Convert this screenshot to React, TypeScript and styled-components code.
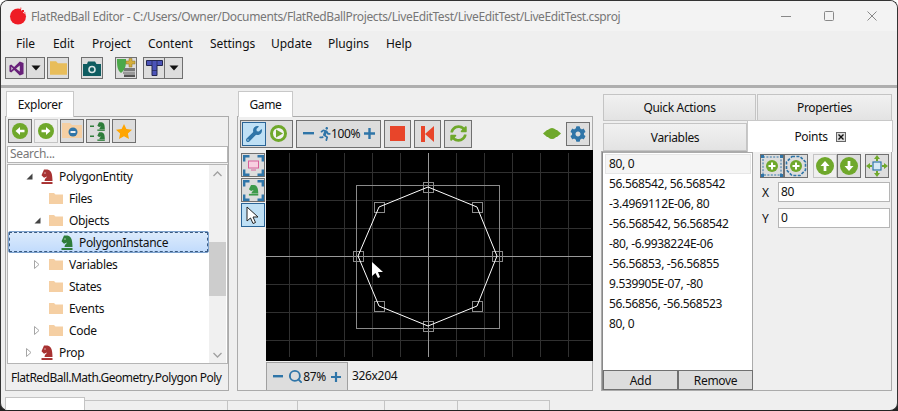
import React from "react";
import styled, { createGlobalStyle } from "styled-components";
import { FaCog, FaRunning, FaSyncAlt, FaWrench } from "react-icons/fa";
import { Search } from "lucide-react";

const UI_FONT = `"Noto Sans", "Open Sans", sans-serif`;
const GREEN = "#6fa82b";
const BLUE = "#2f75a8";
const RED = "#a83232";
const KNIGHT_GREEN = "#2e7d3a";
const ORANGE_RED = "#e8452a";
const KNIGHT_PATH = "M3 0.5 H6.5 C10.5 1 11.5 5 11.5 10.5 H3.5 C3.5 8.5 5.5 7.5 6 6.5 L3 7.5 L0.5 5.5 Z";

const GlobalStyle = createGlobalStyle`
  html, body {
    margin: 0;
    padding: 0;
    width: 898px;
    height: 411px;
    overflow: hidden;
    background: linear-gradient(#ffffff 50%, #222 50%);
  }
  * { box-sizing: border-box; }
`;

const Window = styled.div`
  width: 898px;
  height: 411px;
  display: flex;
  flex-direction: column;
  background: #efefef;
  border: 1px solid #333;
  border-bottom-color: #222;
  border-radius: 8px;
  overflow: hidden;
  font-family: ${UI_FONT};
  font-size: 12px;
  letter-spacing: -0.33px;
  color: #111;
`;

const TitleBar = styled.div`
  height: 30px;
  flex: none;
  display: flex;
  align-items: center;
  padding-left: 8px;
  background: #f3f3f3;
`;

const TitleText = styled.div`
  margin-left: 4px;
  color: #777;
  font-size: 12px;
  letter-spacing: -0.37px;
  white-space: nowrap;
  flex: 1;
`;

const WindowControls = styled.div`
  display: flex;
  align-items: center;
  width: 138px;
  justify-content: space-between;
  padding: 0 20px 0 22px;
`;

const MenuBar = styled.div`
  height: 24px;
  flex: none;
  display: flex;
  align-items: center;
  padding-left: 15px;
`;

const MenuItem = styled.div<{ $w: number }>`
  width: ${(p) => p.$w}px;
  font-size: 12px;
  letter-spacing: -0.05px;
`;

const ToolBar = styled.div`
  height: 33px;
  flex: none;
  display: flex;
  padding: 2px 0 0 4px;
  border-bottom: 3px solid #aeaeae;
`;

const ToolGroup = styled.div<{ $ml?: number }>`
  display: flex;
  margin-left: ${(p) => p.$ml ?? 0}px;
  height: 23px;
`;

const IconButton = styled.div<{
  $w?: number;
  $h?: number;
  $active?: boolean;
  $light?: boolean;
  $flat?: boolean;
  $ml?: number;
}>`
  width: ${(p) => p.$w ?? 24}px;
  height: ${(p) => p.$h ?? 24}px;
  margin-left: ${(p) => p.$ml ?? 0}px;
  flex: none;
  display: flex;
  align-items: center;
  justify-content: center;
  border: 1px solid
    ${(p) => (p.$flat ? "transparent" : p.$active ? "#2a6496" : p.$light ? "#c4c4c4" : "#707070")};
  background: ${(p) => (p.$active ? "#bfe0f5" : p.$light ? "#efefef" : "#dddddd")};
`;

const Main = styled.div`
  flex: none;
  height: 300px;
  margin-top: 3px;
  padding-left: 4px;
  display: flex;
`;

const Column = styled.div<{ $w: number; $mr?: number }>`
  width: ${(p) => p.$w}px;
  margin-right: ${(p) => p.$mr ?? 0}px;
  display: flex;
  flex-direction: column;
`;

const TabStrip = styled.div`
  height: 26px;
  flex: none;
  display: flex;
  padding-left: 1px;
`;

const Tab = styled.div<{ $w: number }>`
  width: ${(p) => p.$w}px;
  height: 26px;
  display: flex;
  align-items: center;
  justify-content: center;
  background: #fff;
  border: 1px solid #c8c8c8;
  border-bottom: none;
  position: relative;
  z-index: 1;
  font-size: 12px;
`;

const Panel = styled.div`
  flex: 1;
  margin-top: -1px;
  border: 1px solid #ababab;
  display: flex;
  flex-direction: column;
  min-height: 0;
`;

const ExplorerTools = styled.div`
  display: flex;
  gap: 2px;
  padding: 2px 0 0 2px;
  height: 29px;
  flex: none;
`;

const SearchBox = styled.div`
  height: 17px;
  flex: none;
  margin: 0 0 1px 1px;
  width: 221px;
  background: #fff;
  border: 1px solid #b5b5b5;
  color: #777;
  padding-left: 2px;
  line-height: 14px;
`;

const TreeWrap = styled.div`
  height: 200px;
  flex: none;
  margin-left: 1px;
  width: 221px;
  background: #fff;
  border: 1px solid #b5b5b5;
  display: flex;
`;

const TreeRows = styled.div`
  width: 201px;
  flex: none;
  display: flex;
  flex-direction: column;
`;

const TreeRow = styled.div<{ $indent: number; $selected?: boolean }>`
  height: 22px;
  display: flex;
  align-items: center;
  padding-left: ${(p) => p.$indent}px;
  white-space: nowrap;
  ${(p) =>
    p.$selected
      ? `background: linear-gradient(#dcebfc, #c1dbfc);
         outline: 1px dashed #3a5a80;
         outline-offset: -2px;
         border: 1px solid #7da2ce;
         border-radius: 2px;`
      : ""}
`;

const ArrowSlot = styled.div`
  width: 15px;
  flex: none;
  display: flex;
  align-items: center;
`;

const RowIcon = styled.div<{ $w: number }>`
  width: ${(p) => p.$w}px;
  flex: none;
  display: flex;
  align-items: center;
`;

const ScrollBar = styled.div`
  width: 17px;
  flex: none;
  display: flex;
  flex-direction: column;
  align-items: center;
  background: #f0f0f0;
`;

const ScrollArrow = styled.div`
  height: 17px;
  width: 17px;
  flex: none;
  display: flex;
  align-items: center;
  justify-content: center;
`;

const ScrollThumb = styled.div<{ $h: number; $mt: number }>`
  width: 17px;
  height: ${(p) => p.$h}px;
  margin-top: ${(p) => p.$mt}px;
  background: #cdcdcd;
  flex: none;
`;

const StatusLabel = styled.div`
  flex: 1;
  padding: 5px 0 0 5px;
  white-space: nowrap;
  letter-spacing: -0.5px;
`;

const GameTools = styled.div`
  height: 33px;
  flex: none;
  display: flex;
  align-items: center;
  padding: 0 2px;
  gap: 3px;
`;

const GameGroup = styled.div<{ $w: number; $spread?: boolean }>`
  width: ${(p) => p.$w}px;
  height: 28px;
  flex: none;
  display: flex;
  align-items: center;
  justify-content: ${(p) => (p.$spread ? "space-between" : "flex-start")};
  padding: ${(p) => (p.$spread ? "0 5px 0 6px" : "1px")};
  border: 1px solid #707070;
  background: #dddddd;
`;

const ZoomLabel = styled.span`
  font-size: 12px;
  letter-spacing: -0.4px;
`;

const Runner = styled(FaRunning)`
  margin-right: -5px;
  flex: none;
`;

const Spacer = styled.div`
  flex: 1;
`;

const GameBody = styled.div`
  flex: 1;
  display: flex;
  min-height: 0;
`;

const SideTools = styled.div`
  width: 28px;
  flex: none;
  padding: 3px 0 0 3px;
  display: flex;
  flex-direction: column;
  gap: 1px;
`;

const GameCanvas = styled.div`
  width: 327px;
  height: 211px;
  background: #000;
  flex: none;
  display: flex;
`;

const GameFooter = styled.div`
  height: 28px;
  flex: none;
  display: flex;
  align-items: center;
  margin-left: 28px;
`;

const FooterZoom = styled.div`
  width: 82px;
  height: 28px;
  flex: none;
  display: flex;
  align-items: center;
  justify-content: space-between;
  padding: 0 6px;
  background: #dddddd;
  border: 1px solid #a0a0a0;
  border-bottom: none;
`;

const FooterMiddle = styled.div`
  display: flex;
  align-items: center;
`;

const FooterSize = styled.span`
  margin: 0 0 2px 4px;
  font-size: 12px;
`;

const PropTabs = styled.div`
  height: 60px;
  flex: none;
  display: flex;
  flex-direction: column;
  gap: 1px;
  padding: 3px 0 0 2px;
`;

const PropRow = styled.div`
  display: flex;
  height: 28px;
  flex: none;
`;

const PropTab = styled.div<{ $w: number; $mr?: number; $h?: number }>`
  width: ${(p) => p.$w}px;
  margin-right: ${(p) => p.$mr ?? 0}px;
  height: ${(p) => p.$h ?? 27}px;
  flex: none;
  display: flex;
  align-items: center;
  justify-content: center;
  background: linear-gradient(#f1f1f1, #e3e3e3);
  border: 1px solid #c4c4c4;
`;

const ActiveTab = styled.div<{ $w: number }>`
  width: ${(p) => p.$w}px;
  height: 32px;
  margin-top: -3px;
  flex: none;
  display: flex;
  align-items: center;
  justify-content: center;
  gap: 8px;
  background: #fff;
  border: 1px solid #c8c8c8;
  border-bottom: none;
  position: relative;
  z-index: 1;
`;

const TabClose = styled.div`
  width: 10px;
  height: 10px;
  border: 1px solid #666;
  background: #ddd;
  display: flex;
  align-items: center;
  justify-content: center;
`;

const PropPanel = styled.div`
  flex: 1;
  border: 1px solid #ababab;
  display: flex;
  min-height: 0;
`;

const PointList = styled.div`
  width: 151px;
  flex: none;
  display: flex;
  flex-direction: column;
  border-left: 1px solid #888;
`;

const PointRows = styled.div`
  flex: 1;
  background: #fff;
  border-right: 1px solid #ababab;
  border-top: 1px solid #ababab;
  padding: 1px 1px 0 2px;
`;

const PointRow = styled.div<{ $selected?: boolean }>`
  height: 20px;
  line-height: 18px;
  padding-left: 3px;
  white-space: nowrap;
  border: 1px solid ${(p) => (p.$selected ? "#e6e6e6" : "transparent")};
  background: ${(p) => (p.$selected ? "#f5f5f5" : "transparent")};
`;

const ListButtons = styled.div`
  display: flex;
  height: 20px;
  flex: none;
`;

const TextButton = styled.div`
  flex: 1;
  display: flex;
  align-items: center;
  justify-content: center;
  background: #dddddd;
  border: 1px solid #707070;
`;

const PointEditor = styled.div`
  flex: 1;
  padding: 2px 0 0 7px;
  display: flex;
  flex-direction: column;
`;

const PointTools = styled.div`
  display: flex;
  height: 24px;
  margin-bottom: 4px;
`;

const Field = styled.div`
  display: flex;
  align-items: center;
  height: 20px;
  margin-bottom: 6px;
`;

const FieldLabel = styled.div`
  width: 18px;
  padding-left: 2px;
  flex: none;
`;

const FieldInput = styled.div`
  width: 112px;
  height: 20px;
  flex: none;
  background: #fff;
  border: 1px solid #b5b5b5;
  padding-left: 2px;
  line-height: 17px;
`;

const BottomTabs = styled.div`
  flex: 1;
  display: flex;
  align-items: flex-end;
  padding-left: 4px;
`;

const BottomTab = styled.div<{ $w: number; $white?: boolean }>`
  width: ${(p) => p.$w}px;
  height: ${(p) => (p.$white ? 13 : 10)}px;
  flex: none;
  background: ${(p) => (p.$white ? "#fff" : "transparent")};
  border: 1px solid #c4c4c4;
  border-bottom: none;
  border-left: ${(p) => (p.$white ? "1px solid #c4c4c4" : "none")};
`;

const Knight = ({ color }: { color: string }) => (
  <svg width="12" height="15" viewBox="0 0 12 13" preserveAspectRatio="none">
    <path d={KNIGHT_PATH} fill={color} />
    <rect x="3.5" y="3" width="1" height="1" fill="#fff" />
    <rect x="0.5" y="11.3" width="11" height="1.7" fill={color} />
  </svg>
);

const Folder = ({ color = "#f5cfa3", w = 14 }: { color?: string; w?: number }) => (
  <svg width={w} height={Math.round(w * 0.8)} viewBox="0 0 14 11">
    <path d="M0 0 H5 L6.5 1.5 H14 V11 H0 Z" fill={color} />
  </svg>
);

const FilledArrow = () => (
  <svg width="7" height="7" viewBox="0 0 7 7">
    <path d="M6.5 0.5 V6.5 H0.5 Z" fill="#444" />
  </svg>
);

const HollowArrow = () => (
  <svg width="6" height="9" viewBox="0 0 6 9">
    <path d="M0.5 0.5 L5 4.5 L0.5 8.5 Z" fill="#fff" stroke="#a6a6a6" />
  </svg>
);

const ArrowCircle = ({ dir, size = 16 }: { dir: "left" | "right" | "up" | "down"; size?: number }) => {
  const rot = { left: 180, right: 0, up: -90, down: 90 }[dir];
  return (
    <svg width={size} height={size} viewBox="0 0 16 16">
      <circle cx="8" cy="8" r="8" fill={GREEN} />
      <g transform={`rotate(${rot} 8 8)`}>
        <path d="M3.5 6.8 H8 V4 L12.5 8 L8 12 V9.2 H3.5 Z" fill="#fff" />
      </g>
    </svg>
  );
};

const DropChevron = () => (
  <svg width="10" height="6" viewBox="0 0 10 6">
    <path d="M0.5 0.5 H9.5 L5 5.5 Z" fill="#111" />
  </svg>
);

const VsLogo = () => (
  <svg width="15" height="15" viewBox="0 0 16 16">
    <path
      fillRule="evenodd"
      d="M11.5 0.5 L5.5 6.3 L2.3 3.8 L0.5 4.7 V11.3 L2.3 12.2 L5.5 9.7 L11.5 15.5 L15.5 13.8 V2.2 Z M11.5 4.8 V11.2 L7.5 8 Z M2.5 6 L4.2 8 L2.5 10 Z"
      fill="#68217a"
    />
  </svg>
);

const Camera = () => (
  <svg width="18" height="15" viewBox="0 0 18 15">
    <path d="M0 3 H4 L5 0.5 H12 L13.5 3 H18 V15 H0 Z" fill="#0e5c60" />
    <circle cx="9" cy="8.5" r="3" fill="none" stroke="#d6e4e4" strokeWidth="1.6" />
  </svg>
);

const ConnectIcon = () => (
  <svg width="20" height="20" viewBox="0 0 20 20">
    <path d="M1 1 H10 C10 7 10 11 5 15 C1 12 1 7 1 1 Z" fill="#4ca84a" />
    <path d="M10 3 H13 V0.5 H16 V3 H19 V6 H16 V9 H13 V6 H10 Z" fill="#d4ae3c" stroke="#8a7326" strokeWidth="0.5" />
    <rect x="8" y="10" width="11" height="3" fill="#777" />
    <rect x="7" y="13.5" width="12" height="2.5" fill="#999" />
    <rect x="8" y="16.5" width="11" height="2.5" fill="#555" />
  </svg>
);

const TetrisT = () => (
  <svg width="17" height="16" viewBox="0 0 17 16">
    <path d="M0.5 0.5 H16.5 V5.5 H11 V15.5 H6 V5.5 H0.5 Z" fill="#4b53b8" stroke="#23264f" />
    <path d="M6 0.5 V5.5 M11 0.5 V5.5 M6 10.5 H11" stroke="#23264f" strokeWidth="0.7" />
  </svg>
);

const Star = () => (
  <svg width="16" height="15" viewBox="0 0 16 15">
    <path d="M8 0 L10.4 5 L16 5.7 L11.9 9.5 L13 15 L8 12.3 L3 15 L4.1 9.5 L0 5.7 L5.6 5 Z" fill="#ffa500" />
  </svg>
);

const FolderMinus = () => (
  <svg width="20" height="16" viewBox="0 0 20 16">
    <path d="M0 0 H8 L10 2 H20 V15 H0 Z" fill="#f5cfa3" />
    <circle cx="11" cy="9" r="4.5" fill={BLUE} />
    <rect x="8.5" y="8" width="5" height="2" fill="#f0f0f0" />
  </svg>
);

const CollapseKnights = () => (
  <svg width="18" height="19" viewBox="0 0 18 19">
    <rect x="1" y="3.5" width="4" height="1.5" fill={KNIGHT_GREEN} />
    <rect x="1" y="13.5" width="4" height="1.5" fill={KNIGHT_GREEN} />
    <g transform="translate(8 0) scale(0.68)">
      <path d={KNIGHT_PATH} fill={KNIGHT_GREEN} />
      <rect x="0.5" y="11" width="11" height="2" fill={KNIGHT_GREEN} />
    </g>
    <g transform="translate(8 10) scale(0.68)">
      <path d={KNIGHT_PATH} fill={KNIGHT_GREEN} />
      <rect x="0.5" y="11" width="11" height="2" fill={KNIGHT_GREEN} />
    </g>
  </svg>
);

const PlayCircle = () => (
  <svg width="17" height="17" viewBox="0 0 17 17">
    <circle cx="8.5" cy="8.5" r="7" fill="#f2f2f2" stroke={GREEN} strokeWidth="3" />
    <path d="M6 4.5 L13 8.5 L6 12.5 Z" fill={GREEN} />
  </svg>
);

const MinusMark = ({ w = 11 }: { w?: number }) => (
  <svg width={w} height="3" viewBox={`0 0 ${w} 3`}>
    <rect width={w} height="2.4" fill={BLUE} />
  </svg>
);

const PlusMark = ({ size = 11 }: { size?: number }) => (
  <svg width={size} height={size} viewBox="0 0 11 11">
    <path d="M4.3 0 H6.7 V4.3 H11 V6.7 H6.7 V11 H4.3 V6.7 H0 V4.3 H4.3 Z" fill={BLUE} />
  </svg>
);

const BackMark = () => (
  <svg width="13" height="16" viewBox="0 0 13 16">
    <rect x="0" y="0" width="4" height="16" fill={ORANGE_RED} />
    <path d="M13 0 V16 L4 8 Z" fill={ORANGE_RED} />
  </svg>
);

const EntityBadge = () => (
  <svg width="18" height="11" viewBox="0 0 18 11">
    <path d="M0 5.5 L4 2 H14 L18 5.5 L14 9 H4 Z" fill={GREEN} />
    <ellipse cx="9" cy="5.5" rx="5" ry="5.5" fill={GREEN} />
  </svg>
);

const FrameCorners = ({ children }: { children: React.ReactNode }) => (
  <svg width="21" height="21" viewBox="0 0 21 21">
    <path
      d="M1.2 6.5 V1.2 H6.5 M14.5 1.2 H19.8 V6.5 M19.8 14.5 V19.8 H14.5 M6.5 19.8 H1.2 V14.5"
      fill="none"
      stroke={BLUE}
      strokeWidth="2.4"
    />
    {children}
  </svg>
);

const ArrowCursor = () => (
  <svg width="14" height="19" viewBox="0 0 14 19">
    <path d="M1 1 V15 L4.5 12 L7 17.5 L9.5 16.5 L7 11 H12 Z" fill="#fff" stroke="#222" />
  </svg>
);

const AddToRect = () => (
  <svg width="22" height="22" viewBox="0 0 22 22">
    <rect x="2" y="2" width="18" height="18" fill="none" stroke={BLUE} strokeDasharray="2 1.4" />
    <path d="M0 0 H3 V3 H0 Z M19 0 H22 V3 H19 Z M0 19 H3 V22 H0 Z M19 19 H22 V22 H19 Z" fill={BLUE} />
    <circle cx="11" cy="11" r="6" fill={GREEN} />
    <path d="M10 7.5 H12 V10 H14.5 V12 H12 V14.5 H10 V12 H7.5 V10 H10 Z" fill="#fff" />
  </svg>
);

const AddToPolygon = () => (
  <svg width="22" height="22" viewBox="0 0 22 22">
    <path
      d="M7 1.5 H15 L20.5 7 V15 L15 20.5 H7 L1.5 15 V7 Z"
      fill="none"
      stroke={BLUE}
      strokeWidth="1.6"
      strokeDasharray="3 1.4"
    />
    <circle cx="11" cy="11" r="6" fill={GREEN} />
    <path d="M10 7.5 H12 V10 H14.5 V12 H12 V14.5 H10 V12 H7.5 V10 H10 Z" fill="#fff" />
  </svg>
);

const MoveAll = () => (
  <svg width="22" height="22" viewBox="0 0 22 22">
    <rect x="7" y="7" width="8" height="8" fill="#d5e8f5" stroke={BLUE} strokeWidth="1.2" />
    <path
      d="M11 0 L14 4 H12 V6 H10 V4 H8 Z M11 22 L8 18 H10 V16 H12 V18 H14 Z M0 11 L4 8 V10 H6 V12 H4 V14 Z M22 11 L18 14 V12 H16 V10 H18 V8 Z"
      fill={GREEN}
    />
  </svg>
);

const AppLogo = () => (
  <svg width="18" height="18" viewBox="0 0 18 18">
    <circle cx="9" cy="9.5" r="8" fill="#ee1c25" />
    <path d="M11 0 L18 0 L18 6 L15 6.5 L12.5 3.5 Z" fill="#f3f3f3" />
    <rect x="13" y="3" width="2" height="2" fill="#ee1c25" />
    <rect x="11" y="0.5" width="1.5" height="1.5" fill="#f28a8a" />
    <rect x="15" y="5" width="1.5" height="1.5" fill="#f28a8a" />
  </svg>
);

const GRID_X = [-5, -4, -3, -2, -1, 1, 2, 3, 4, 5];
const GRID_Y = [-3, -2, -1, 1, 2, 3];
const CX = 162;
const CY = 106;
const VERTS: [number, number][] = [
  [231, 106],
  [211, 57],
  [162, 37],
  [113, 57],
  [92, 106],
  [113, 156],
  [162, 176],
  [211, 156],
];

const Viewport = () => (
  <svg width="327" height="211" viewBox="0 0 327 211">
    {GRID_X.map((k) => {
      const x = Math.round(CX + 27.9 * k) + 0.5;
      return <line key={k} x1={x} x2={x} y1="3" y2="207" stroke="#303030" />;
    })}
    {GRID_Y.map((k) => {
      const y = Math.round(CY + 27.9 * k) + 0.5;
      return <line key={k} x1="0" x2="325" y1={y} y2={y} stroke="#303030" />;
    })}
    <line x1={CX + 0.5} x2={CX + 0.5} y1="3" y2="207" stroke="#999" />
    <line x1="0" x2="325" y1={CY + 0.5} y2={CY + 0.5} stroke="#999" />
    <rect x="90.5" y="35.5" width="143" height="143" fill="none" stroke="#8a8a8a" />
    {VERTS.map(([x, y]) => (
      <rect key={`${x}-${y}`} x={x - 5 + 0.5} y={y - 5 + 0.5} width="10" height="10" fill="none" stroke="#8a8a8a" />
    ))}
    <polygon points={VERTS.map(([x, y]) => `${x},${y}`).join(" ")} fill="none" stroke="#fff" />
    <path d="M106 112 V126 L109.5 123 L112 128 L114 127 L112 122 H117 Z" fill="#fff" />
  </svg>
);

const treeRows = [
  { label: "PolygonEntity", indent: 18, arrow: "open", icon: "red" },
  { label: "Files", indent: 26, icon: "folder" },
  { label: "Objects", indent: 26, arrow: "open", icon: "folder" },
  { label: "PolygonInstance", indent: 37, icon: "green", selected: true },
  { label: "Variables", indent: 26, arrow: "closed", icon: "folder" },
  { label: "States", indent: 26, icon: "folder" },
  { label: "Events", indent: 26, icon: "folder" },
  { label: "Code", indent: 26, arrow: "closed", icon: "folder" },
  { label: "Prop", indent: 18, arrow: "closed", icon: "red" },
];

const points = [
  "80, 0",
  "56.568542, 56.568542",
  "-3.4969112E-06, 80",
  "-56.568542, 56.568542",
  "-80, -6.9938224E-06",
  "-56.56853, -56.56855",
  "9.539905E-07, -80",
  "56.56856, -56.568523",
  "80, 0",
];

const menus: [string, number][] = [
  ["File", 37],
  ["Edit", 39],
  ["Project", 56],
  ["Content", 62],
  ["Settings", 61],
  ["Update", 57],
  ["Plugins", 58],
  ["Help", 40],
];

export default function App() {
  return (
    <Window>
      <GlobalStyle />
      <TitleBar>
        <AppLogo />
        <TitleText>
          FlatRedBall Editor - C:/Users/Owner/Documents/FlatRedBallProjects/LiveEditTest/LiveEditTest/LiveEditTest.csproj
        </TitleText>
        <WindowControls>
          <svg width="10" height="10" viewBox="0 0 10 10">
            <rect y="5" width="10" height="1" fill="#888" />
          </svg>
          <svg width="10" height="10" viewBox="0 0 10 10">
            <rect x="0.5" y="0.5" width="9" height="9" rx="1" fill="none" stroke="#888" />
          </svg>
          <svg width="10" height="10" viewBox="0 0 10 10">
            <path d="M0.5 0.5 L9.5 9.5 M9.5 0.5 L0.5 9.5" stroke="#888" />
          </svg>
        </WindowControls>
      </TitleBar>

      <MenuBar>
        {menus.map(([name, w]) => (
          <MenuItem key={name} $w={w}>
            {name}
          </MenuItem>
        ))}
      </MenuBar>

      <ToolBar>
        <ToolGroup>
          <IconButton $w={22} $h={22}><VsLogo /></IconButton>
          <IconButton $w={19} $h={22} $ml={-1}><DropChevron /></IconButton>
        </ToolGroup>
        <ToolGroup $ml={2}>
          <IconButton $w={22} $h={22}><Folder color="#e8bd5a" w={17} /></IconButton>
        </ToolGroup>
        <ToolGroup $ml={12}>
          <IconButton $w={22} $h={22}><Camera /></IconButton>
        </ToolGroup>
        <ToolGroup $ml={12}>
          <IconButton $w={22} $h={22}><ConnectIcon /></IconButton>
        </ToolGroup>
        <ToolGroup $ml={6}>
          <IconButton $w={22} $h={22}><TetrisT /></IconButton>
          <IconButton $w={19} $h={22} $ml={-1}><DropChevron /></IconButton>
        </ToolGroup>
      </ToolBar>

      <Main>
        <Column $w={224} $mr={8}>
          <TabStrip>
            <Tab $w={68}>Explorer</Tab>
          </TabStrip>
          <Panel>
            <ExplorerTools>
              <IconButton><ArrowCircle dir="left" /></IconButton>
              <IconButton $light><ArrowCircle dir="right" /></IconButton>
              <IconButton><FolderMinus /></IconButton>
              <IconButton><CollapseKnights /></IconButton>
              <IconButton><Star /></IconButton>
            </ExplorerTools>
            <SearchBox>Search...</SearchBox>
            <TreeWrap>
              <TreeRows>
                {treeRows.map((row) => (
                  <TreeRow key={row.label} $indent={row.indent} $selected={row.selected}>
                    <ArrowSlot>
                      {row.arrow === "open" && <FilledArrow />}
                      {row.arrow === "closed" && <HollowArrow />}
                    </ArrowSlot>
                    {row.icon === "folder" ? (
                      <RowIcon $w={20}><Folder /></RowIcon>
                    ) : (
                      <RowIcon $w={18}>
                        <Knight color={row.icon === "red" ? RED : KNIGHT_GREEN} />
                      </RowIcon>
                    )}
                    {row.label}
                  </TreeRow>
                ))}
              </TreeRows>
              <ScrollBar>
                <ScrollArrow>
                  <svg width="9" height="6" viewBox="0 0 9 6">
                    <path d="M0.5 5 L4.5 1 L8.5 5" fill="none" stroke="#a0a0a0" strokeWidth="1.3" />
                  </svg>
                </ScrollArrow>
                <ScrollThumb $h={54} $mt={60} />
                <Spacer />
                <ScrollArrow>
                  <svg width="9" height="6" viewBox="0 0 9 6">
                    <path d="M0.5 1 L4.5 5 L8.5 1" fill="none" stroke="#a0a0a0" strokeWidth="1.3" />
                  </svg>
                </ScrollArrow>
              </ScrollBar>
            </TreeWrap>
            <StatusLabel>FlatRedBall.Math.Geometry.Polygon Poly</StatusLabel>
          </Panel>
        </Column>

        <Column $w={356} $mr={8}>
          <TabStrip>
            <Tab $w={55}>Game</Tab>
          </TabStrip>
          <Panel>
            <GameTools>
              <GameGroup $w={53}>
                <IconButton $active $w={24} $h={24}><FaWrench size={16} color={BLUE} /></IconButton>
                <IconButton $flat $w={24} $h={24}><PlayCircle /></IconButton>
              </GameGroup>
              <GameGroup $w={85} $spread>
                <MinusMark />
                <Runner size={14} color={BLUE} />
                <ZoomLabel>100%</ZoomLabel>
                <PlusMark />
              </GameGroup>
              <IconButton $w={27} $h={28}>
                <svg width="15" height="15" viewBox="0 0 15 15"><rect width="15" height="15" fill={ORANGE_RED} /></svg>
              </IconButton>
              <IconButton $w={27} $h={28}><BackMark /></IconButton>
              <IconButton $w={28} $h={28}><FaSyncAlt size={17} color={GREEN} /></IconButton>
              <Spacer />
              <EntityBadge />
              <IconButton $ml={2}><FaCog size={16} color={BLUE} /></IconButton>
            </GameTools>
            <GameBody>
              <SideTools>
                <IconButton>
                  <FrameCorners>
                    <rect x="5.5" y="6" width="10" height="7" fill="#f7cfe0" stroke="#d8609a" />
                    <path d="M8 15 H13" stroke="#d8609a" />
                  </FrameCorners>
                </IconButton>
                <IconButton>
                  <FrameCorners>
                    <g transform="translate(5.5 4.5) scale(0.85)">
                      <path d={KNIGHT_PATH} fill="#3e9a4a" />
                      <rect x="0.5" y="11" width="11" height="2" fill="#3e9a4a" />
                    </g>
                  </FrameCorners>
                </IconButton>
                <IconButton $active><ArrowCursor /></IconButton>
              </SideTools>
              <GameCanvas><Viewport /></GameCanvas>
            </GameBody>
            <GameFooter>
              <FooterZoom>
                <MinusMark w={10} />
                <FooterMiddle>
                  <Search size={15} color={BLUE} strokeWidth={3} />
                  <ZoomLabel>87%</ZoomLabel>
                </FooterMiddle>
                <PlusMark size={10} />
              </FooterZoom>
              <FooterSize>326x204</FooterSize>
            </GameFooter>
          </Panel>
        </Column>

        <Column $w={291}>
          <PropTabs>
            <PropRow>
              <PropTab $w={153} $mr={1}>Quick Actions</PropTab>
              <PropTab $w={135}>Properties</PropTab>
            </PropRow>
            <PropRow>
              <PropTab $w={144} $h={28}>Variables</PropTab>
              <ActiveTab $w={146}>
                Points
                <TabClose>
                  <svg width="6" height="6" viewBox="0 0 6 6">
                    <path d="M0.5 0.5 L5.5 5.5 M5.5 0.5 L0.5 5.5" stroke="#111" strokeWidth="1.4" />
                  </svg>
                </TabClose>
              </ActiveTab>
            </PropRow>
          </PropTabs>
          <PropPanel>
            <PointList>
              <PointRows>
                {points.map((p, i) => (
                  <PointRow key={i} $selected={i === 0}>{p}</PointRow>
                ))}
              </PointRows>
              <ListButtons>
                <TextButton>Add</TextButton>
                <TextButton>Remove</TextButton>
              </ListButtons>
            </PointList>
            <PointEditor>
              <PointTools>
                <IconButton><AddToRect /></IconButton>
                <IconButton><AddToPolygon /></IconButton>
                <IconButton $light $ml={5}><ArrowCircle dir="up" size={18} /></IconButton>
                <IconButton><ArrowCircle dir="down" size={18} /></IconButton>
                <IconButton $ml={4}><MoveAll /></IconButton>
              </PointTools>
              <Field>
                <FieldLabel>X</FieldLabel>
                <FieldInput>80</FieldInput>
              </Field>
              <Field>
                <FieldLabel>Y</FieldLabel>
                <FieldInput>0</FieldInput>
              </Field>
            </PointEditor>
          </PropPanel>
        </Column>
      </Main>

      <BottomTabs>
        <BottomTab $w={80} $white />
        <BottomTab $w={143} />
        <BottomTab $w={70} />
        <BottomTab $w={87} />
        <BottomTab $w={73} />
        <BottomTab $w={92} />
      </BottomTabs>
    </Window>
  );
}
